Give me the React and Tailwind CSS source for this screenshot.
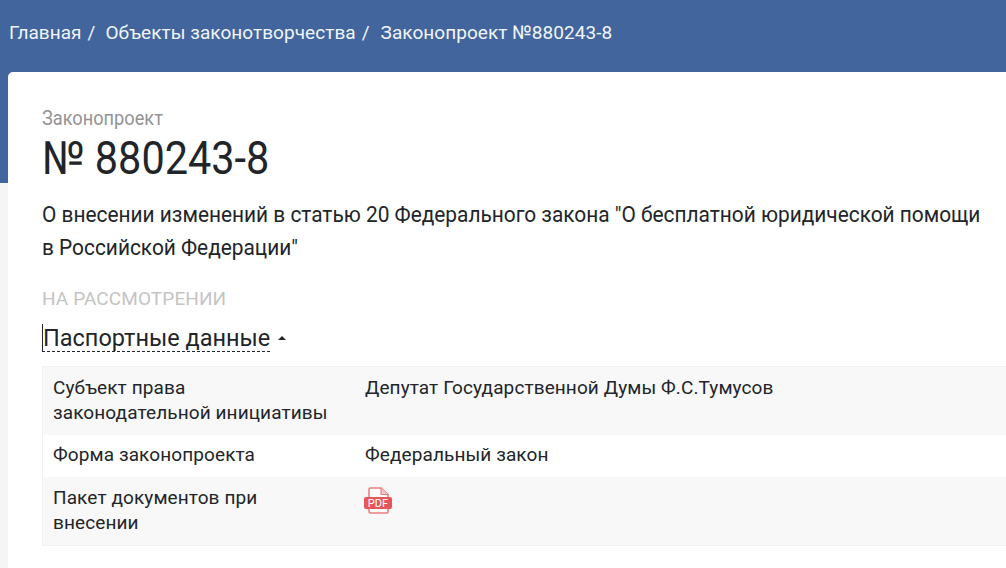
import React from "react";

const ROWS = [
  {
    label: "Субъект права законодательной инициативы",
    value: "Депутат Государственной Думы Ф.С.Тумусов",
    bg: "bg-[#f8f8f8]",
    height: "h-[68px] pt-[8px]",
  },
  {
    label: "Форма законопроекта",
    value: "Федеральный закон",
    bg: "bg-white",
    height: "h-[42px] pt-[7px]",
  },
  {
    label: "Пакет документов при внесении",
    pdf: true,
    bg: "bg-[#f8f8f8]",
    height: "h-[68px] pt-[8px]",
  },
];

const PdfIcon = () => (
  <svg width="30" height="28" viewBox="0 0 30 28" className="block -ml-[2px] mt-[2px]">
    <path
      d="M6 12V2.5A1.5 1.5 0 0 1 7.5 1H18l7 6.5V12M25 21v3.5a1.5 1.5 0 0 1-1.5 1.5h-16A1.5 1.5 0 0 1 6 24.500V21"
      fill="#fff"
      stroke="#ea7d80"
      strokeWidth="1.6"
    />
    <path d="M18 1v6.500h7" fill="#f6c9ca" stroke="#ea7d80" strokeWidth="1.2" />
    <rect x="1" y="10" width="28" height="12" rx="2" fill="#e5565b" />
    <text
      x="15"
      y="20"
      textAnchor="middle"
      fill="#fff"
      fontSize="11"
      fontWeight="400"
      fontFamily="Roboto, sans-serif"
    >
      PDF
    </text>
  </svg>
);

const Breadcrumbs = () => (
  <div className="h-[72px] flex items-center pb-[6px] pl-[9px] text-[19px] tracking-[0.05px] text-[#f2f5f9]">
    <span>Главная</span>
    <span className="ml-[6px] mr-[10px]">/</span>
    <span>Объекты законотворчества</span>
    <span className="ml-[6px] mr-[11px]">/</span>
    <span>Законопроект №880243-8</span>
  </div>
);

const App = () => {
  return (
    <div className="w-[1006px] h-[568px] overflow-hidden bg-[linear-gradient(#41659c_183px,#f5f5f5_183px)] font-['Roboto',sans-serif]">
      <Breadcrumbs />

      <div className="ml-2 -mr-4 h-[496px] bg-white rounded-tl-[5px] pl-[34px] pt-[34px]">
        <div className="text-[20px] leading-[24px] text-[#949494] origin-left scale-x-[0.91] w-max">
          Законопроект
        </div>
        <h1 className="mt-[3px] text-[46px] leading-[50px] font-normal text-[#212529] origin-left scale-x-[0.9] w-max">
          № 880243-8
        </h1>

        <div className="mt-[15px] w-[1100px] text-[#212529] text-[22px] leading-[33px] origin-left scale-x-[0.948]">
          <div>О внесении изменений в статью 20 Федерального закона "О бесплатной юридической помощи</div>
          <div>в Российской Федерации"</div>
        </div>

        <div className="mt-[23px] text-[19px] leading-[24px] tracking-[0.1px] text-[#c4c4c4]">НА РАССМОТРЕНИИ</div>

        <div className="mt-[12px] flex items-center h-[30px]">
          <span className="h-[28px] border-l border-b border-dashed [border-left-style:solid] border-[#212529] text-[23.5px] leading-[28px] text-[#212529]">
            Паспортные данные
          </span>
          <span className="ml-2 w-0 h-0 border-x-[4px] border-x-transparent border-b-[4px] border-b-[#212529]" />
        </div>

        <div className="mt-[13px] border border-[#f1f1f1] border-r-0">
          {ROWS.map((row) => (
            <div key={row.label} className={`flex ${row.bg} ${row.height} text-[19px] leading-[25px] text-[#212529] tracking-[0.1px]`}>
              <div className="w-[322px] pl-[10px] pr-[24px] shrink-0">{row.label}</div>
              {row.pdf ? <PdfIcon /> : <div>{row.value}</div>}
            </div>
          ))}
        </div>
      </div>
    </div>
  );
};

export default App;
